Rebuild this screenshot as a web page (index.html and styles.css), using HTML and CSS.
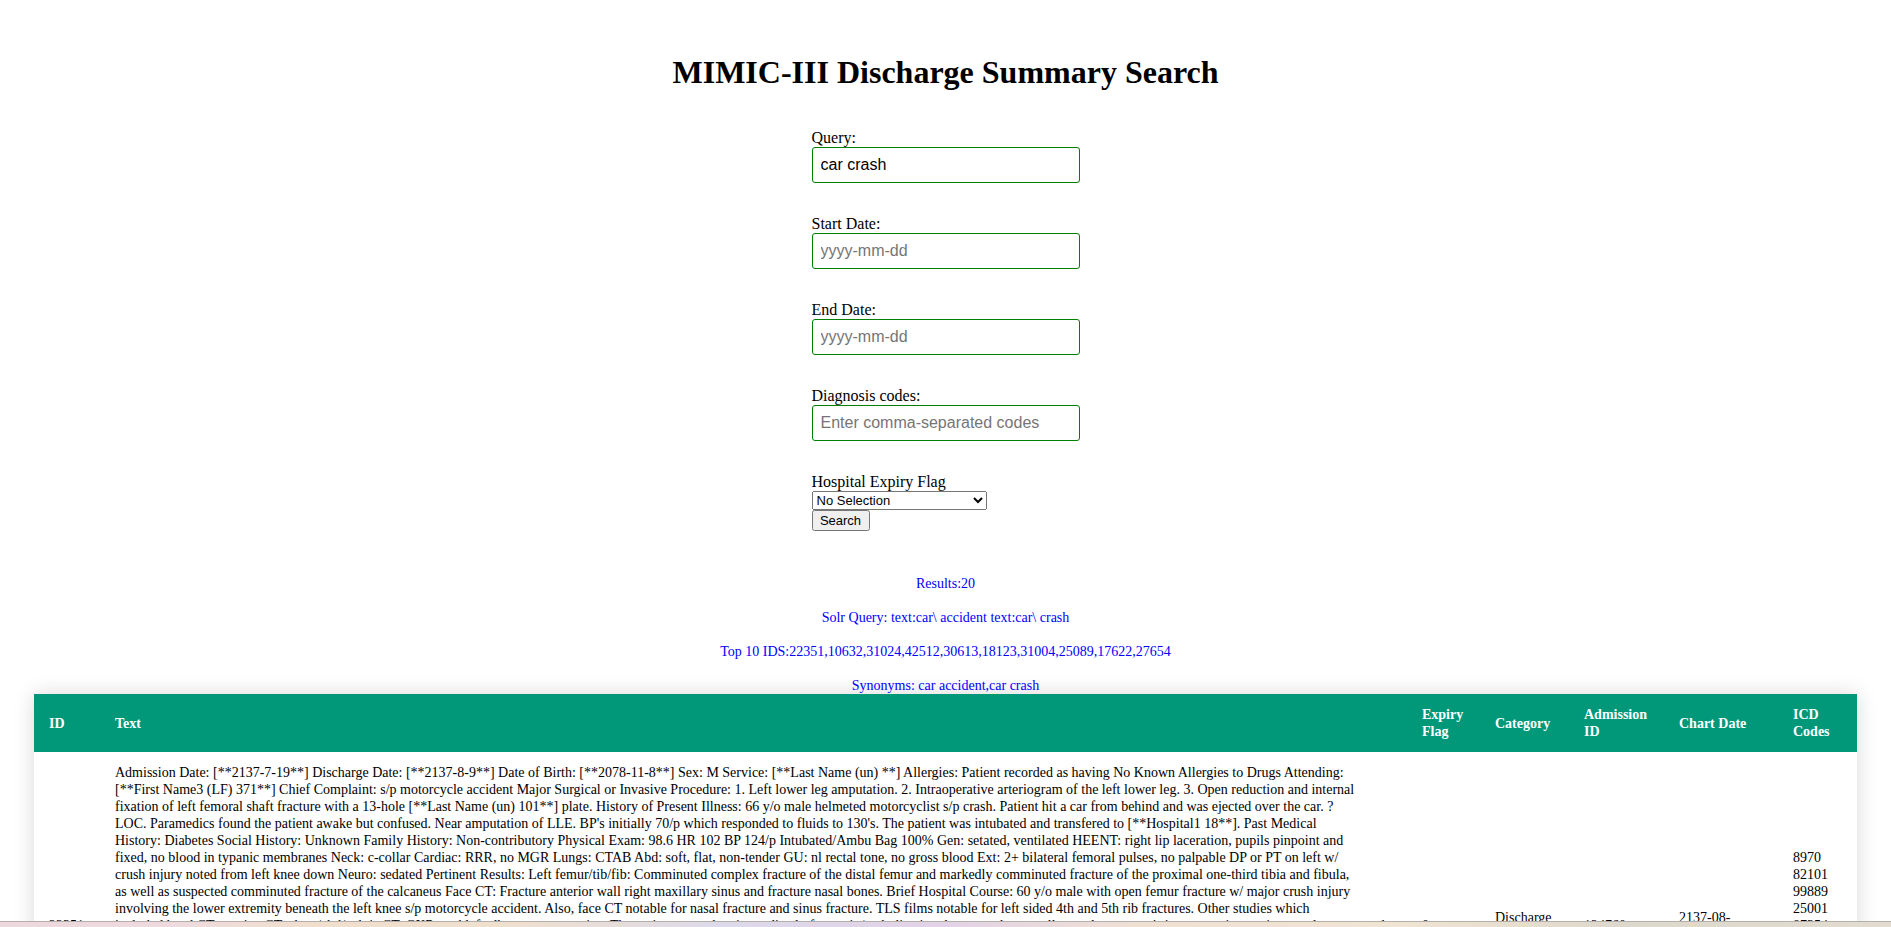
FILE: index.html
```html
<!DOCTYPE html>
<html lang="en">
<head>
<meta charset="utf-8">
<title>MIMIC-III Discharge Summary Search</title>
<link rel="stylesheet" href="styles.css">
</head>
<body>
<main class="page">
  <h1 class="title">MIMIC-III Discharge Summary Search</h1>
  <form class="search">
    <div class="field">
      <label for="query">Query:</label>
      <input class="text-box" id="query" type="text" value="car crash">
    </div>
    <div class="field">
      <label for="start">Start Date:</label>
      <input class="text-box" id="start" type="text" placeholder="yyyy-mm-dd">
    </div>
    <div class="field">
      <label for="end">End Date:</label>
      <input class="text-box" id="end" type="text" placeholder="yyyy-mm-dd">
    </div>
    <div class="field">
      <label for="codes">Diagnosis codes:</label>
      <input class="text-box" id="codes" type="text" placeholder="Enter comma-separated codes">
    </div>
    <label for="flag">Hospital Expiry Flag</label>
    <select class="flag" id="flag"><option>No Selection</option></select>
    <button class="submit" type="button">Search</button>
  </form>
  <div class="info">
    <p>Results:20</p>
    <p>Solr Query: text:car\ accident text:car\ crash</p>
    <p>Top 10 IDS:22351,10632,31024,42512,30613,18123,31004,25089,17622,27654</p>
    <p>Synonyms: car accident,car crash</p>
  </div>
  <table class="results">
    <colgroup>
      <col class="c-id"><col><col class="c-expiry"><col class="c-category"><col class="c-admission"><col class="c-date"><col class="c-icd">
    </colgroup>
    <thead>
      <tr><th>ID</th><th>Text</th><th>Expiry Flag</th><th>Category</th><th>Admission ID</th><th>Chart Date</th><th>ICD Codes</th></tr>
    </thead>
    <tbody>
      <tr>
        <td>22351</td>
        <td class="note">Admission Date: [**2137-7-19**] Discharge Date: [**2137-8-9**] Date of Birth: [**2078-11-8**] Sex: M Service: [**Last Name (un) **] Allergies: Patient recorded as having No Known Allergies to Drugs Attending:
[**First Name3 (LF) 371**] Chief Complaint: s/p motorcycle accident Major Surgical or Invasive Procedure: 1. Left lower leg amputation. 2. Intraoperative arteriogram of the left lower leg. 3. Open reduction and internal
fixation of left femoral shaft fracture with a 13-hole [**Last Name (un) 101**] plate. History of Present Illness: 66 y/o male helmeted motorcyclist s/p crash. Patient hit a car from behind and was ejected over the car. ?
LOC. Paramedics found the patient awake but confused. Near amputation of LLE. BP's initially 70/p which responded to fluids to 130's. The patient was intubated and transfered to [**Hospital1 18**]. Past Medical
History: Diabetes Social History: Unknown Family History: Non-contributory Physical Exam: 98.6 HR 102 BP 124/p Intubated/Ambu Bag 100% Gen: setated, ventilated HEENT: right lip laceration, pupils pinpoint and
fixed, no blood in typanic membranes Neck: c-collar Cardiac: RRR, no MGR Lungs: CTAB Abd: soft, flat, non-tender GU: nl rectal tone, no gross blood Ext: 2+ bilateral femoral pulses, no palpable DP or PT on left w/
crush injury noted from left knee down Neuro: sedated Pertinent Results: Left femur/tib/fib: Comminuted complex fracture of the distal femur and markedly comminuted fracture of the proximal one-third tibia and fibula,
as well as suspected comminuted fracture of the calcaneus Face CT: Fracture anterior wall right maxillary sinus and fracture nasal bones. Brief Hospital Course: 60 y/o male with open femur fracture w/ major crush injury
involving the lower extremity beneath the left knee s/p motorcycle accident. Also, face CT notable for nasal fracture and sinus fracture. TLS films notable for left sided 4th and 5th rib fractures. Other studies which
included head CT, c-spine CT, chest/abd/pelvis CT, CXR, and left elbow were negative. The patient was taken immediately for angio/embolization, however the on-call vascular surgeon's intraoperative angiogram demonstrated</td>
        <td>0</td>
        <td>Discharge summary</td>
        <td>124760</td>
        <td>2137-08-09T00:00:00Z</td>
        <td class="icd">8970 82101 99889 25001 87354</td>
      </tr>
    </tbody>
  </table>
  <div class="desktop-edge"></div>
</main>
</body>
</html>
```
FILE: styles.css
```css
body {
  margin: 0;
  background: #fff;
  color: #000;
  font: 16px/18px "Liberation Serif", "Times New Roman", serif;
}

.page {
  box-sizing: border-box;
  height: 100vh;
  padding: 53px 34px 0;
  overflow: hidden;
}

.title {
  margin: 0;
  font-size: 32px;
  line-height: 38px;
  text-align: center;
}

.search {
  display: flex;
  flex-direction: column;
  align-items: flex-start;
  width: 268px;
  margin: 38px auto 44px;
}

.field {
  display: flex;
  flex-direction: column;
  width: 100%;
  margin-bottom: 32px;
}

.text-box {
  box-sizing: border-box;
  width: 100%;
  height: 36px;
  padding: 0 8px;
  border: 1px solid green;
  border-radius: 3px;
  font: 16px "Liberation Sans", Arial, sans-serif;
}

.flag,
.submit {
  margin: 0;
  font: 13px "Liberation Sans", Arial, sans-serif;
}

.flag {
  width: 175px;
  height: 19px;
}

.submit {
  width: 58px;
  height: 21px;
  padding: 1px 6px;
}

.info {
  color: blue;
  font-size: 14px;
  line-height: 17px;
  text-align: center;
}

.info p {
  margin: 0 0 17px;
}

.info p:last-child {
  margin: 0;
}

.results {
  width: 100%;
  border-collapse: collapse;
  table-layout: fixed;
  font-size: 14px;
  line-height: 17px;
  box-shadow: 0 0 20px rgba(0, 0, 0, 0.15);
}

.results th {
  background: #009879;
  color: #fff;
  text-align: left;
}

.results th,
.results td {
  padding: 12px 15px;
}

.results tbody tr {
  height: 347px;
}

.results .note {
  vertical-align: top;
  white-space: pre-line;
}

.results .icd {
  padding-bottom: 80px;
}

.c-id { width: 66px; }
.c-expiry { width: 73px; }
.c-category { width: 89px; }
.c-admission { width: 95px; }
.c-date { width: 114px; }
.c-icd { width: 79px; }

/* Strip of wallpaper along the foot of the window */
.desktop-edge {
  position: fixed;
  right: 0;
  bottom: 0;
  left: 0;
  height: 5px;
  border-top: 1px solid #b5aeaa;
  background: linear-gradient(90deg, #ecd8dd 0%, #eedade 9%, #f0dfcc 17%, #efdfcd 27%, #dcdaea 38%, #e2d2e6 50%, #efe0d4 60%, #f0e4d2 74%, #ddd8cc 86%, #e2dcd0 100%);
}
```
